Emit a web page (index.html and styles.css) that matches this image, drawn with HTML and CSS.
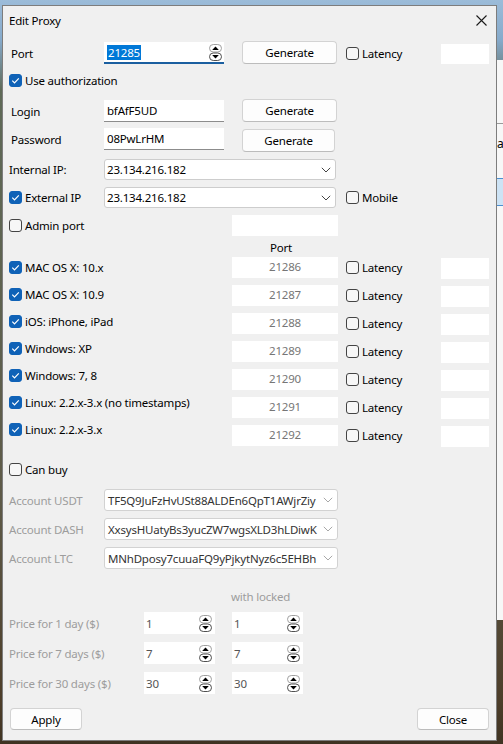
FILE: index.html
```html
<!DOCTYPE html>
<html>
<head>
<meta charset="utf-8">
<title>Edit Proxy</title>
<link rel="stylesheet" href="styles.css">
</head>
<body>
<div class="backwin">
  <div class="bw-line"></div>
  <div class="bw-a">a</div>
  <div class="bw-sel"></div>
</div>
<div class="dialog">
  <div class="titlebar">
    <span class="title">Edit Proxy</span>
    <svg class="close" width="11" height="11" viewBox="0 0 11 11"><path d="M0.5 0.5 L10.5 10.5 M10.5 0.5 L0.5 10.5" stroke="#1a1a1a" stroke-width="1.1" fill="none"/></svg>
  </div>
  <div class="content">
    <div class="row r-port">
      <span class="lbl lcol pad">Port</span>
      <div class="spin focused w120"><span class="sel">21285</span><svg class="spinbtn" width="13" height="17" viewBox="0 0 13 17"><rect x="0.5" y="0.5" width="12" height="7.5" rx="3.75" fill="#fff" stroke="#a0a0a0"/><path d="M3.2 6 L6.5 2.4 L9.8 6 Z" fill="#000"/><rect x="0.5" y="9" width="12" height="7.5" rx="3.75" fill="#fff" stroke="#505050"/><path d="M3.2 11 L6.5 14.6 L9.8 11 Z" fill="#000"/></svg></div>
      <button class="btn gen">Generate</button>
      <div class="chk lat"><span class="box"></span>Latency</div>
      <div class="whitebox"></div>
    </div>

    <div class="row r-auth">
      <div class="chk"><span class="box on"><svg width="13" height="13" viewBox="0 0 13 13"><path d="M3.3 6.7 L5.5 8.9 L9.8 4.4" stroke="#fff" stroke-width="1.2" fill="none"/></svg></span>Use authorization</div>
    </div>

    <div class="row r-login">
      <span class="lbl lcol pad">Login</span>
      <div class="text w120">bfAfF5UD</div>
      <button class="btn gen">Generate</button>
    </div>

    <div class="row r-pass">
      <span class="lbl lcol pad">Password</span>
      <div class="text w120">08PwLrHM</div>
      <button class="btn gen gen2">Generate</button>
    </div>

    <div class="row r-int">
      <span class="lbl lcol">Internal IP:</span>
      <div class="combo w232"><span class="cv">23.134.216.182</span><svg class="chev" width="10" height="6" viewBox="0 0 10 6"><path d="M0.8 0.8 L5 5 L9.2 0.8" stroke="#444" stroke-width="1" fill="none"/></svg></div>
    </div>

    <div class="row r-ext">
      <div class="chk lcol"><span class="box on"><svg width="13" height="13" viewBox="0 0 13 13"><path d="M3.3 6.7 L5.5 8.9 L9.8 4.4" stroke="#fff" stroke-width="1.2" fill="none"/></svg></span>External IP</div>
      <div class="combo w232"><span class="cv">23.134.216.182</span><svg class="chev" width="10" height="6" viewBox="0 0 10 6"><path d="M0.8 0.8 L5 5 L9.2 0.8" stroke="#444" stroke-width="1" fill="none"/></svg></div>
      <div class="chk mob"><span class="box"></span>Mobile</div>
    </div>

    <div class="row r-admin">
      <div class="chk wide"><span class="box"></span>Admin port</div>
      <div class="portbox"></div>
    </div>

    <div class="porthead">Port</div>

    <div class="os">
      <div class="os-labels">
        <div class="chk oslbl"><span class="box on"><svg width="13" height="13" viewBox="0 0 13 13"><path d="M3.3 6.7 L5.5 8.9 L9.8 4.4" stroke="#fff" stroke-width="1.2" fill="none"/></svg></span>MAC OS X: 10.x</div>
        <div class="chk oslbl"><span class="box on"><svg width="13" height="13" viewBox="0 0 13 13"><path d="M3.3 6.7 L5.5 8.9 L9.8 4.4" stroke="#fff" stroke-width="1.2" fill="none"/></svg></span>MAC OS X: 10.9</div>
        <div class="chk oslbl"><span class="box on"><svg width="13" height="13" viewBox="0 0 13 13"><path d="M3.3 6.7 L5.5 8.9 L9.8 4.4" stroke="#fff" stroke-width="1.2" fill="none"/></svg></span>iOS: iPhone, iPad</div>
        <div class="chk oslbl"><span class="box on"><svg width="13" height="13" viewBox="0 0 13 13"><path d="M3.3 6.7 L5.5 8.9 L9.8 4.4" stroke="#fff" stroke-width="1.2" fill="none"/></svg></span>Windows: XP</div>
        <div class="chk oslbl"><span class="box on"><svg width="13" height="13" viewBox="0 0 13 13"><path d="M3.3 6.7 L5.5 8.9 L9.8 4.4" stroke="#fff" stroke-width="1.2" fill="none"/></svg></span>Windows: 7, 8</div>
        <div class="chk oslbl"><span class="box on"><svg width="13" height="13" viewBox="0 0 13 13"><path d="M3.3 6.7 L5.5 8.9 L9.8 4.4" stroke="#fff" stroke-width="1.2" fill="none"/></svg></span>Linux: 2.2.x-3.x (no timestamps)</div>
        <div class="chk oslbl"><span class="box on"><svg width="13" height="13" viewBox="0 0 13 13"><path d="M3.3 6.7 L5.5 8.9 L9.8 4.4" stroke="#fff" stroke-width="1.2" fill="none"/></svg></span>Linux: 2.2.x-3.x</div>
      </div>
      <div class="os-rows">
        <div class="os-row"><div class="portbox val">21286</div><div class="chk lat"><span class="box"></span>Latency</div><div class="whitebox sm"></div></div>
        <div class="os-row"><div class="portbox val">21287</div><div class="chk lat"><span class="box"></span>Latency</div><div class="whitebox sm"></div></div>
        <div class="os-row"><div class="portbox val">21288</div><div class="chk lat"><span class="box"></span>Latency</div><div class="whitebox sm"></div></div>
        <div class="os-row"><div class="portbox val">21289</div><div class="chk lat"><span class="box"></span>Latency</div><div class="whitebox sm"></div></div>
        <div class="os-row"><div class="portbox val">21290</div><div class="chk lat"><span class="box"></span>Latency</div><div class="whitebox sm"></div></div>
        <div class="os-row"><div class="portbox val">21291</div><div class="chk lat"><span class="box"></span>Latency</div><div class="whitebox sm"></div></div>
        <div class="os-row"><div class="portbox val">21292</div><div class="chk lat"><span class="box"></span>Latency</div><div class="whitebox sm"></div></div>
      </div>
    </div>

    <div class="row r-canbuy">
      <div class="chk"><span class="box"></span>Can buy</div>
    </div>

    <div class="row r-acc first">
      <span class="lbl lcol gray">Account USDT</span>
      <div class="combo w234 dis"><span class="cv">TF5Q9JuFzHvUSt88ALDEn6QpT1AWjrZiy</span><svg class="chev" width="10" height="6" viewBox="0 0 10 6"><path d="M0.8 0.8 L5 5 L9.2 0.8" stroke="#a8a8a8" stroke-width="1" fill="none"/></svg></div>
    </div>
    <div class="row r-acc">
      <span class="lbl lcol gray">Account DASH</span>
      <div class="combo w234 dis"><span class="cv">XxsysHUatyBs3yucZW7wgsXLD3hLDiwK</span><svg class="chev" width="10" height="6" viewBox="0 0 10 6"><path d="M0.8 0.8 L5 5 L9.2 0.8" stroke="#a8a8a8" stroke-width="1" fill="none"/></svg></div>
    </div>
    <div class="row r-acc">
      <span class="lbl lcol gray">Account LTC</span>
      <div class="combo w234 dis"><span class="cv">MNhDposy7cuuaFQ9yPjkytNyz6c5EHBh</span><svg class="chev" width="10" height="6" viewBox="0 0 10 6"><path d="M0.8 0.8 L5 5 L9.2 0.8" stroke="#a8a8a8" stroke-width="1" fill="none"/></svg></div>
    </div>

    <div class="withlocked">with locked</div>

    <div class="row r-price first">
      <span class="lbl gray plbl">Price for 1 day ($)</span>
      <div class="spin pspin"><span class="pv">1</span><svg class="spinbtn" width="13" height="17" viewBox="0 0 13 17"><rect x="0.5" y="0.5" width="12" height="7.5" rx="3.75" fill="#fff" stroke="#a0a0a0"/><path d="M3.2 6 L6.5 2.4 L9.8 6 Z" fill="#000"/><rect x="0.5" y="9" width="12" height="7.5" rx="3.75" fill="#fff" stroke="#505050"/><path d="M3.2 11 L6.5 14.6 L9.8 11 Z" fill="#000"/></svg></div>
      <div class="spin pspin second"><span class="pv">1</span><svg class="spinbtn" width="13" height="17" viewBox="0 0 13 17"><rect x="0.5" y="0.5" width="12" height="7.5" rx="3.75" fill="#fff" stroke="#a0a0a0"/><path d="M3.2 6 L6.5 2.4 L9.8 6 Z" fill="#000"/><rect x="0.5" y="9" width="12" height="7.5" rx="3.75" fill="#fff" stroke="#505050"/><path d="M3.2 11 L6.5 14.6 L9.8 11 Z" fill="#000"/></svg></div>
    </div>
    <div class="row r-price">
      <span class="lbl gray plbl">Price for 7 days ($)</span>
      <div class="spin pspin"><span class="pv">7</span><svg class="spinbtn" width="13" height="17" viewBox="0 0 13 17"><rect x="0.5" y="0.5" width="12" height="7.5" rx="3.75" fill="#fff" stroke="#a0a0a0"/><path d="M3.2 6 L6.5 2.4 L9.8 6 Z" fill="#000"/><rect x="0.5" y="9" width="12" height="7.5" rx="3.75" fill="#fff" stroke="#505050"/><path d="M3.2 11 L6.5 14.6 L9.8 11 Z" fill="#000"/></svg></div>
      <div class="spin pspin second"><span class="pv">7</span><svg class="spinbtn" width="13" height="17" viewBox="0 0 13 17"><rect x="0.5" y="0.5" width="12" height="7.5" rx="3.75" fill="#fff" stroke="#a0a0a0"/><path d="M3.2 6 L6.5 2.4 L9.8 6 Z" fill="#000"/><rect x="0.5" y="9" width="12" height="7.5" rx="3.75" fill="#fff" stroke="#505050"/><path d="M3.2 11 L6.5 14.6 L9.8 11 Z" fill="#000"/></svg></div>
    </div>
    <div class="row r-price">
      <span class="lbl gray plbl">Price for 30 days ($)</span>
      <div class="spin pspin"><span class="pv">30</span><svg class="spinbtn" width="13" height="17" viewBox="0 0 13 17"><rect x="0.5" y="0.5" width="12" height="7.5" rx="3.75" fill="#fff" stroke="#a0a0a0"/><path d="M3.2 6 L6.5 2.4 L9.8 6 Z" fill="#000"/><rect x="0.5" y="9" width="12" height="7.5" rx="3.75" fill="#fff" stroke="#505050"/><path d="M3.2 11 L6.5 14.6 L9.8 11 Z" fill="#000"/></svg></div>
      <div class="spin pspin second"><span class="pv">30</span><svg class="spinbtn" width="13" height="17" viewBox="0 0 13 17"><rect x="0.5" y="0.5" width="12" height="7.5" rx="3.75" fill="#fff" stroke="#a0a0a0"/><path d="M3.2 6 L6.5 2.4 L9.8 6 Z" fill="#000"/><rect x="0.5" y="9" width="12" height="7.5" rx="3.75" fill="#fff" stroke="#505050"/><path d="M3.2 11 L6.5 14.6 L9.8 11 Z" fill="#000"/></svg></div>
    </div>

    <div class="row r-buttons">
      <button class="btn act">Apply</button>
      <button class="btn act">Close</button>
    </div>
  </div>
</div>
</body>
</html>
```

FILE: styles.css
```css
* { box-sizing: border-box; }
html, body { margin: 0; padding: 0; }
body {
  width: 503px;
  height: 744px;
  overflow: hidden;
  position: relative;
  padding: 5px 0 0 2px;
  background: linear-gradient(to bottom, #9cbcd9 0, #86aacb 40px, #5f6a58 90px, #5e5a48 500px, #4d3e2a 700px, #3f3322 100%);
  font-family: "Noto Sans", "DejaVu Sans", sans-serif;
  font-size: 11.5px;
  letter-spacing: -0.2px;
  color: #000;
}

.backwin {
  position: absolute;
  left: 497px;
  top: 60px;
  width: 12px;
  height: 560px;
  background: #f7f7f7;
}
.bw-line { margin-top: 63px; height: 1px; background: #9a9a9a; }
.bw-a { margin-top: 12px; font-size: 12px; line-height: 16px; color: #000; }
.bw-sel { margin-top: 26px; height: 28px; background: #cde3f5; border-top: 1px solid #4e8fd0; border-bottom: 1px solid #4e8fd0; }

.dialog {
  position: relative;
  z-index: 1;
  width: 495px;
  height: 736px;
  background: #f0f0f0;
  border: 1px solid #7d7d7d;
}

.titlebar {
  height: 32px;
  padding: 0 9px 4px 6px;
  display: flex;
  align-items: center;
  justify-content: space-between;
}
.title { color: #000; }
.close { display: block; }

.content { padding-left: 6px; }

.row { display: flex; align-items: center; }
.lcol { width: 95px; flex: none; }
.pad { padding-left: 2px; }
.lbl { white-space: nowrap; }
.gray { color: #9d9d9d; }

.r-port { margin-top: 3px; height: 24px; }
.r-auth { margin-top: 5px; height: 20px; }
.r-login { margin-top: 10px; height: 22px; }
.r-pass { margin-top: 6px; height: 22px; }
.r-int { margin-top: 9px; height: 21px; }
.r-ext { margin-top: 7px; height: 21px; }
.r-admin { margin-top: 7px; height: 21px; }

/* checkbox */
.chk { display: flex; align-items: center; white-space: nowrap; }
.box {
  width: 13px; height: 13px; flex: none;
  margin-right: 3px;
  border: 1px solid #444;
  border-radius: 3px;
  background: #f7f7f7;
  display: block;
}
.box.on { background: #0f62b7; border-color: #0f62b7; }
.box.on svg { display: block; margin: -1px 0 0 -1px; }

/* spin */
.spin {
  height: 22px;
  background: #fff;
  display: flex;
  align-items: center;
  justify-content: space-between;
  flex: none;
}
.w120 { width: 120px; }
.spin.focused { border-bottom: 2px solid #1b5fa0; padding: 0 2px 0 3px; }
.sel { background: #0078d7; color: #fff; line-height: 15px; padding: 0 1px; margin-top: 1px; }
.spinbtn { display: block; }
.focused .spinbtn { margin-top: 1px; }

.btn {
  font-family: inherit;
  font-size: 11.5px;
  letter-spacing: -0.2px;
  color: #000;
  background: #fdfdfd;
  border: 1px solid #d3d3d3;
  border-bottom-color: #bcbcbc;
  border-radius: 4px;
  height: 23px;
  padding: 0;
  flex: none;
}
.gen { width: 95px; margin-left: 18px; }
.r-port .gen { margin-top: -2px; }
.r-login .gen { margin-top: -2px; }
.gen2 { width: 93px; margin-top: 2px; }

.lat { width: 95px; margin-left: 9px; flex: none; }
.whitebox { width: 48px; height: 20px; background: #fff; flex: none; margin-top: 2px; }

.text {
  height: 22px;
  background: #fff;
  border-bottom: 1px solid #8c8c8c;
  padding-left: 3px;
  line-height: 21px;
  flex: none;
}

.combo {
  height: 21px;
  background: #fff;
  border: 1px solid #cdcdcd;
  border-radius: 3px;
  display: flex;
  align-items: center;
  flex: none;
  padding: 0 4px 0 2px;
}
.w232 { width: 232px; }
.w234 { width: 234px; height: 22px; }
.cv { flex: 1; white-space: nowrap; }
.dis .cv { color: #333; }
.chev { flex: none; margin-left: 3px; display: block; }
.mob { margin-left: 10px; }

.wide { width: 223px; flex: none; }
.portbox { width: 106px; height: 21px; background: #fff; flex: none; }
.portbox.val { color: #767676; text-align: center; line-height: 20px; }

.porthead { margin-top: 4px; height: 16px; line-height: 16px; padding-left: 261px; }

.os { margin-top: 1px; display: flex; align-items: flex-start; }
.os-labels { width: 223px; flex: none; margin-top: -3px; display: flex; flex-direction: column; }
.oslbl { height: 27px; }
.os-rows { display: flex; flex-direction: column; gap: 7px; }
.os-row { display: flex; align-items: center; height: 21px; }
.os-row .lat { margin-left: 8px; }
.whitebox.sm { height: 21px; }

.r-canbuy { margin-top: 14px; height: 18px; }

.r-acc { margin-top: 7px; height: 22px; }
.r-acc.first { margin-top: 11px; }
.dis { border-color: #d2d2d2; padding-left: 3px; }

.withlocked { margin-top: 21px; height: 14px; line-height: 14px; padding-left: 222px; color: #9d9d9d; }

.r-price { margin-top: 8px; height: 22px; }
.plbl { width: 135px; flex: none; }
.pspin { width: 71px; padding: 0 3px 0 2px; }
.pspin.second { margin-left: 17px; }
.pv { color: #555; }

.r-buttons { margin-top: 14px; height: 22px; justify-content: space-between; padding-right: 7px; padding-left: 1px; }
.act { width: 72px; height: 22px; }
```
